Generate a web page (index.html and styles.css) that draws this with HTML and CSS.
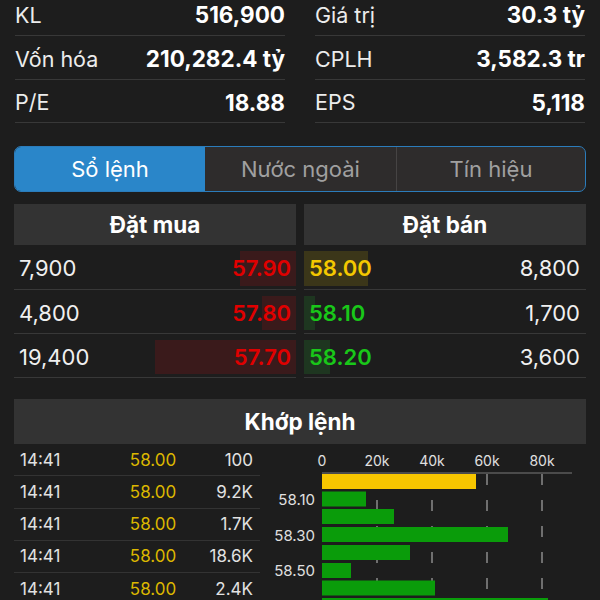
FILE: index.html
```html
<!DOCTYPE html>
<html lang="vi">
<head>
<meta charset="utf-8">
<title>Sổ lệnh</title>
<link rel="stylesheet" href="styles.css">
</head>
<body>
<main class="page">
  <section class="stats">
    <div class="stat"><span class="lbl">KL</span><span class="val">516,900</span></div>
    <div class="stat"><span class="lbl">Giá trị</span><span class="val">30.3 tỷ</span></div>
    <div class="stat"><span class="lbl">Vốn hóa</span><span class="val">210,282.4 tỷ</span></div>
    <div class="stat"><span class="lbl">CPLH</span><span class="val">3,582.3 tr</span></div>
    <div class="stat"><span class="lbl">P/E</span><span class="val">18.88</span></div>
    <div class="stat"><span class="lbl">EPS</span><span class="val">5,118</span></div>
  </section>

  <nav class="tabs">
    <div class="tab active">Sổ lệnh</div>
    <div class="tab">Nước ngoài</div>
    <div class="tab">Tín hiệu</div>
  </nav>

  <section class="book">
    <div class="side">
      <div class="head">Đặt mua</div>
      <div class="brow"><span class="bar bar-buy" style="width:56px"></span><span class="qty">7,900</span><span class="px red">57.90</span></div>
      <div class="brow"><span class="bar bar-buy" style="width:34px"></span><span class="qty">4,800</span><span class="px red">57.80</span></div>
      <div class="brow"><span class="bar bar-buy" style="width:141px"></span><span class="qty">19,400</span><span class="px red">57.70</span></div>
    </div>
    <div class="side">
      <div class="head">Đặt bán</div>
      <div class="srow"><span class="bar bar-ref" style="width:64px"></span><span class="px yellow">58.00</span><span class="qty">8,800</span></div>
      <div class="srow"><span class="bar bar-sell" style="width:11px"></span><span class="px green">58.10</span><span class="qty">1,700</span></div>
      <div class="srow"><span class="bar bar-sell" style="width:26px"></span><span class="px green">58.20</span><span class="qty">3,600</span></div>
    </div>
  </section>

  <section class="match">
    <div class="head">Khớp lệnh</div>
    <div class="match-body">
      <div class="trades">
        <div class="trow"><span>14:41</span><span class="tp">58.00</span><span class="tv">100</span></div>
        <div class="trow"><span>14:41</span><span class="tp">58.00</span><span class="tv">9.2K</span></div>
        <div class="trow"><span>14:41</span><span class="tp">58.00</span><span class="tv">1.7K</span></div>
        <div class="trow"><span>14:41</span><span class="tp">58.00</span><span class="tv">18.6K</span></div>
        <div class="trow"><span>14:41</span><span class="tp">58.00</span><span class="tv">2.4K</span></div>
      </div>
      <svg class="chart" width="326" height="170" viewBox="260 443 326 170">
        <g class="grid">
          <line x1="377" y1="473" x2="377" y2="613"/>
          <line x1="432" y1="473" x2="432" y2="613"/>
          <line x1="487" y1="473" x2="487" y2="613"/>
          <line x1="542" y1="473" x2="542" y2="613"/>
        </g>
        <line class="axis" x1="322" y1="472" x2="572" y2="472"/>
        <g class="ticks">
          <text x="322" y="465">0</text>
          <text x="377" y="465">20k</text>
          <text x="432" y="465">40k</text>
          <text x="487" y="465">60k</text>
          <text x="542" y="465">80k</text>
        </g>
        <g class="ylabels">
          <text x="315" y="504">58.10</text>
          <text x="315" y="540">58.30</text>
          <text x="315" y="575">58.50</text>
        </g>
        <rect class="ref" x="322" y="473" width="154" height="15"/>
        <rect class="up" x="322" y="490.5" width="44" height="15"/>
        <rect class="up" x="322" y="508" width="72" height="15"/>
        <rect class="up" x="322" y="526" width="186" height="15"/>
        <rect class="up" x="322" y="544" width="88" height="15"/>
        <rect class="up" x="322" y="562" width="29" height="15"/>
        <rect class="up" x="322" y="579.5" width="113" height="15"/>
        <rect class="up" x="322" y="597" width="226" height="15"/>
      </svg>
    </div>
  </section>
</main>
</body>
</html>
```

FILE: styles.css
```css
* { box-sizing: border-box; }

html, body {
  margin: 0;
  padding: 0;
  background: #1d1d1d;
  color: #f2f2f2;
  font-family: Inter, "Noto Sans", "DejaVu Sans", sans-serif;
  overflow: hidden;
}

.page {
  padding: 0 14px;
  width: 600px;
}

/* top stats */
.stats {
  display: grid;
  grid-template-columns: 270px 270px;
  column-gap: 30px;
  padding: 0 1px;
  margin-top: -8px;
}

.stat {
  height: 44px;
  padding-top: 2px;
  border-bottom: 1px solid #383838;
  display: flex;
  justify-content: space-between;
  align-items: center;
}

.stat:nth-child(5), .stat:nth-child(6) { height: 43px; }

.lbl { color: #ececec; font-weight: 400; font-size: 21.5px; }
.val { color: #fff; font-weight: 700; font-size: 22.5px; }

/* tabs */
.tabs {
  margin-top: 23px;
  height: 46px;
  display: grid;
  grid-template-columns: 190px 191px 1fr;
  border: 1px solid #2b7cbb;
  border-radius: 7px;
  overflow: hidden;
  background: #2e2c2c;
}

.tab {
  display: flex;
  align-items: center;
  justify-content: center;
  font-size: 22px;
  color: #a0a0a0;
  border-left: 1px solid #464444;
}

.tab:first-child { border-left: none; }
.tab.active + .tab { border-left: none; }

.tab.active {
  background: #2a86c9;
  color: #fff;
}

/* order book */
.book {
  margin-top: 12px;
  display: grid;
  grid-template-columns: 282px 282px;
  column-gap: 8px;
}

.head {
  height: 41px;
  background: #333333;
  display: flex;
  align-items: center;
  justify-content: center;
  font-size: 22.5px;
  font-weight: 700;
  color: #fff;
}

.brow, .srow {
  position: relative;
  height: 44px;
  border-bottom: 1px solid #383838;
  display: flex;
  justify-content: space-between;
  align-items: center;
  font-size: 22px;
}

.side .brow:nth-child(2), .side .srow:nth-child(2) { height: 45px; }

.brow { padding: 2px 5px 0 5px; }
.srow { padding: 2px 6px 0 5px; }

.bar {
  position: absolute;
  top: 6px;
  bottom: 3px;
}

.brow .bar { right: 0; }
.srow .bar { left: 0; }

.bar-buy { background: #3a1a1b; }
.bar-ref { background: #3b3619; }
.bar-sell { background: #1e3620; }

.qty { position: relative; color: #f0f0f0; }
.px { position: relative; font-weight: 600; }

.red { color: #e00000; }
.yellow { color: #f4c800; }
.green { color: #19c719; }

/* matched trades */
.match { margin-top: 21px; }

.match .head { height: 45px; }

.match-body {
  display: flex;
}

.trades {
  width: 246px;
}

.trow {
  height: 32.25px;
  border-bottom: 1px solid #333333;
  display: grid;
  grid-template-columns: 104px 58px 1fr;
  align-items: center;
  padding: 0 7px 0 6px;
  font-size: 17px;
  color: #e2e2e2;
}

.tp { color: #dcb700; text-align: center; }
.tv { text-align: right; }

.chart { display: block; }

.grid line {
  stroke: #8a8a8a;
  stroke-width: 1.5;
  stroke-dasharray: 11 15;
}

.axis { stroke: #7a7a7a; stroke-width: 1; }

.ticks text {
  fill: #e0e0e0;
  font-size: 14px;
  text-anchor: middle;
  font-family: Inter, "Noto Sans", sans-serif;
}

.ylabels text {
  fill: #e0e0e0;
  font-size: 15px;
  text-anchor: end;
  font-family: Inter, "Noto Sans", sans-serif;
}

.ref { fill: #f7c600; }
.up { fill: #0a9c0a; }
```
